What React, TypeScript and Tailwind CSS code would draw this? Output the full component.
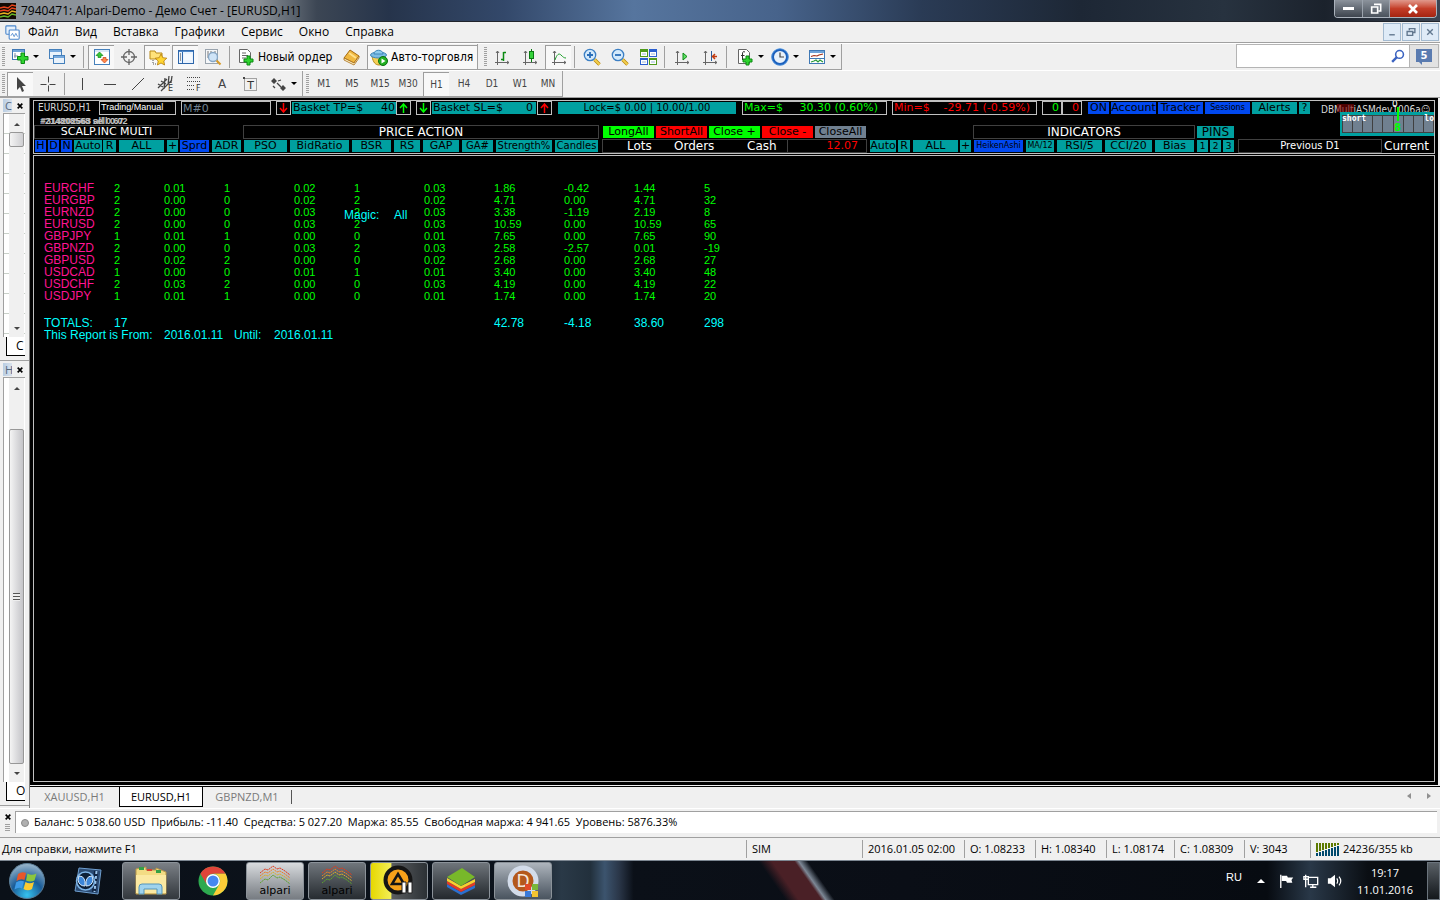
import type { ReactNode } from 'react'
import clsx from 'clsx'

type Children = { children?: ReactNode }

const SEGOE = "font-['Open_Sans','Noto_Sans',sans-serif]"
const TAHOMA = "font-['DejaVu_Sans_Condensed','DejaVu_Sans',sans-serif]"
const VERDANA = "font-['DejaVu_Sans',sans-serif]"
const ARIAL = "font-['Liberation_Sans',sans-serif]"

/* ---------- Icons ---------- */

function Icon({ children, size = 'size-[18px]' }: Children & { size?: string }) {
  return (
    <svg viewBox="0 0 18 18" className={clsx('shrink-0', size)} fill="none" aria-hidden="true">
      {children}
    </svg>
  )
}

const PLUS = 'M10 8h3v3h3v3h-3v3h-3v-3h-3v-3h3z'

const NewChartIcon = () => (
  <Icon>
    <rect x="1.5" y="1.5" width="12" height="10" fill="#fff" stroke="#3f78b5" />
    <path d="M2 3h11" stroke="#6ea3d8" strokeWidth="2" />
    <path d="M4 5v5M3 8h4" stroke="#7a8da3" />
    <path d="M10 5h3.500v3.500H17V12h-3.500v3.500H10V12H6.500V8.500H10z" fill="#2fd32f" stroke="#0b8a12" />
  </Icon>
)

const ProfilesIcon = () => (
  <Icon>
    <rect x="1.500" y="1.500" width="12" height="9" fill="#e9f2fb" stroke="#4580bb" />
    <path d="M2 3h11" stroke="#76a9dd" strokeWidth="2" />
    <rect x="5.500" y="7.500" width="11" height="8" fill="#e9f2fb" stroke="#4580bb" />
    <path d="M6 9h10" stroke="#76a9dd" strokeWidth="2" />
  </Icon>
)

const MarketIcon = () => (
  <Icon>
    <rect x="1.500" y="1.500" width="15" height="15" fill="#fff" stroke="#4580bb" />
    <path d="M2 3h14" stroke="#b5d2ee" />
    <path d="M6.500 4 10 7.500H8v2H5v-2H3z" fill="#37c637" stroke="#128a1a" strokeWidth=".7" />
    <path d="M11.500 15 15 11.500h-2v-2h-3v2H8z" fill="#ff8a4a" stroke="#c9401a" strokeWidth=".7" />
  </Icon>
)

const TargetIcon = () => (
  <Icon>
    <circle cx="9" cy="9" r="5.500" stroke="#666" strokeWidth="1.300" />
    <path d="M9 1v6M9 11v6M1 9h6M11 9h6" stroke="#666" strokeWidth="1.300" />
  </Icon>
)

const NavigatorIcon = () => (
  <Icon>
    <path d="M1 3h5l1 2h6v6H1z" fill="#ffe27a" stroke="#b88a18" />
    <path d="M4 12v4h3" stroke="#555" strokeDasharray="1 1" />
    <path d="m12 6 1.800 3.700 4 .5-3 2.800.8 4-3.600-2-3.600 2 .8-4-3-2.800 4-.5z" fill="#ffd633" stroke="#b57c0d" strokeWidth=".8" />
  </Icon>
)

const TerminalIcon = () => (
  <Icon>
    <rect x="1.500" y="2.500" width="15" height="13" fill="#eaf3fd" stroke="#2d66aa" />
    <path d="M2 3.500h14" stroke="#4c86c8" />
    <path d="M5.500 4v11" stroke="#2d66aa" />
    <path d="M3 6h1M3 8h1M3 10h1M3 12h1" stroke="#333" />
    <path d="M7 7h8M7 9h8M7 11h8" stroke="#fff" />
  </Icon>
)

const TesterIcon = () => (
  <Icon>
    <rect x="1.500" y="1.500" width="12" height="14" fill="#f5f7f9" stroke="#9aa4ae" />
    <path d="M4 3v7M7 3v5M11 3v5" stroke="#777" />
    <circle cx="9" cy="9" r="4.500" fill="#cfe4f7" stroke="#86a6c5" strokeWidth="1.300" />
    <path d="m12.500 12.500 4 4" stroke="#d59a2a" strokeWidth="2.200" />
  </Icon>
)

const NewOrderIcon = () => (
  <Icon>
    <path d="M2.500 1.500h8l3 3v10h-11z" fill="#fff" stroke="#666" />
    <path d="M5 5h4M5 7.500h6M5 10h4" stroke="#666" />
    <path d={PLUS} fill="#2fd32f" stroke="#0b8a12" />
  </Icon>
)

const BookIcon = () => (
  <Icon>
    <path d="m1 10 6-8 9 6-5 7z" fill="#f0b840" stroke="#a66a10" />
    <path d="m1 10 10 5 5-7v2l-5 7-10-5z" fill="#fff2c8" stroke="#a66a10" strokeWidth=".8" />
    <path d="m6 5 7 5" stroke="#ffe08a" strokeWidth="2" />
  </Icon>
)

const AutoIcon = () => (
  <Icon>
    <path d="M2 8c1 7 4 9 7 9s6-3 6-9z" fill="#f4cf55" stroke="#b88a1c" />
    <ellipse cx="8.500" cy="7" rx="8" ry="3" fill="#7bbbe4" stroke="#3f86b8" />
    <path d="M4 6c0-5 9-5 9 0z" fill="#8fcbed" stroke="#3f86b8" />
    <circle cx="13" cy="13" r="4.500" fill="#22b022" stroke="#0c7010" />
    <path d="m11.500 10.500 4 2.500-4 2.500z" fill="#fff" />
  </Icon>
)

function Axes({ children }: Children) {
  return (
    <Icon>
      <path d="M4.500 3v14M2 14.500h14M3 5l1.500-2L6 5M14 13l2 1.500-2 1.500" stroke="#666" />
      {children}
    </Icon>
  )
}

const BarsIcon = () => (
  <Axes><path d="M10.500 4v9M8 11.500h2.500M10.500 4.500H13" stroke="#0a8a12" strokeWidth="1.500" /></Axes>
)
const CandlesIcon = () => (
  <Axes>
    <path d="M10.500 1v13" stroke="#0a7a12" />
    <rect x="8.500" y="3.500" width="4" height="7" fill="#35d23a" stroke="#0a7a12" />
  </Axes>
)
const LineIcon = () => (
  <Axes><path d="M5 12c2-6 4-7 6-5 2 2 3 3 5 3" stroke="#1da02a" /></Axes>
)
const ShiftIcon = () => (
  <Axes><path d="m10 5 4 3.500-4 3.500z" fill="#5fe066" stroke="#0a8a12" /></Axes>
)
const IndentIcon = () => (
  <Axes>
    <path d="M10.500 3v10" stroke="#2b5d9b" />
    <path d="M16 8.500h-4M14 6l-2.500 2.500L14 11" stroke="#c13a10" strokeWidth="1.500" />
  </Axes>
)

function ZoomIcon({ plus = false }: { plus?: boolean }) {
  return (
    <Icon>
      <path d="m11.500 11.500 5 5" stroke="#b8860b" strokeWidth="3.400" />
      <path d="m11.500 11.500 5 5" stroke="#f2cf4f" strokeWidth="2" />
      <circle cx="7" cy="7" r="5.700" fill="#d3e9fb" stroke="#3b7fc4" strokeWidth="1.300" />
      <path d={plus ? 'M7 4v6M4 7h6' : 'M4 7h6'} stroke="#2a6eb8" strokeWidth="1.800" />
    </Icon>
  )
}

const TilesIcon = () => (
  <Icon>
    <path d="M1 1h8v8H1zM10 10h8v7h-8z" fill="#4f9a1c" />
    <path d="M10 1h8v8h-8zM1 10h8v7H1z" fill="#2b5fd0" />
    <path d="M2 4h6v4H2zM11 4h6v4h-6zM2 12h6v4H2zM11 12h6v4h-6z" fill="#fff" />
    <path d="M3 6h4M12 6h4M3 14h4M12 14h4" stroke="#9ab6d8" />
  </Icon>
)

const IndicatorsIcon = () => (
  <Icon>
    <path d="M2.500 1.500h8l3 3v11h-11z" fill="#fff" stroke="#666" />
    <path d="M9 4c-2-1-2.500 0-2.500 2v6M5 7.500h3.500" stroke="#333" />
    <path d={PLUS} fill="#2fd32f" stroke="#0b8a12" />
  </Icon>
)

const ClockIcon = () => (
  <Icon>
    <circle cx="9" cy="9" r="7.300" fill="#e8f1fa" stroke="#1c60bc" strokeWidth="2.600" />
    <circle cx="9" cy="9" r="8.300" stroke="#5da2e8" strokeWidth=".7" />
    <path d="M9 4.500V9h4" stroke="#444" strokeWidth="1.200" />
  </Icon>
)

const TemplateIcon = () => (
  <Icon>
    <rect x="1.500" y="2.500" width="15" height="13" fill="#fff" stroke="#3f78b5" />
    <path d="M2 4h14" stroke="#6ea3d8" strokeWidth="2" />
    <path d="m3 8.500 3-1 3 .5 2-1 4-1" stroke="#a33018" strokeWidth="1.200" />
    <path d="M2 10.500h14" stroke="#3f78b5" />
    <path d="m3 14 3-1 2-1 2 2 2-2 3 2" stroke="#2a9a38" strokeWidth="1.200" />
  </Icon>
)

const CursorIcon = () => (
  <Icon><path d="M5 2v13l3-3 2 5 2-1-2-5h4z" fill="#444" /></Icon>
)
const CrossIcon = () => (
  <Icon><path d="M9.500 1.500v6M9.500 10.500v6M1.500 9.500h6M10.500 9.500h6" stroke="#444" /></Icon>
)
const VLineIcon = () => <Icon><path d="M9.500 3v12" stroke="#444" /></Icon>
const HLineIcon = () => <Icon><path d="M3 9.500h12" stroke="#444" /></Icon>
const DiagIcon = () => <Icon><path d="m3 15 12-12" stroke="#444" /></Icon>

const ChannelIcon = () => (
  <Icon>
    <path d="m1 13 9-9M4 16 15 5M1 9l5 3M4 6l5 3M7 14l1-11M11 10l1-9M14 8l1-7" stroke="#444" strokeWidth="1.300" />
    <text x="11" y="16" fontSize="8" fill="#333" className="font-['DejaVu_Sans']">E</text>
  </Icon>
)
const FiboIcon = () => (
  <Icon>
    <path d="M2 2.500h14M2 6.500h14M2 10.500h8M2 14.500h8" stroke="#444" strokeDasharray="1 1" />
    <text x="11" y="16" fontSize="8" fill="#333" className="font-['DejaVu_Sans']">F</text>
  </Icon>
)
const LetterIcon = () => <span className={clsx(VERDANA, 'text-[12px] leading-4 text-[#444]')}>A</span>
const LabelIcon = () => (
  <Icon>
    <rect x="3.500" y="3.500" width="12" height="12" stroke="#555" strokeDasharray="1 1" />
    <path d="M2 2h2v2H2z" fill="#444" />
    <text x="9.500" y="13.500" fontSize="11" textAnchor="middle" fill="#333" className="font-['DejaVu_Sans']">T</text>
  </Icon>
)
const ArrowsIcon = () => (
  <Icon>
    <path d="m5 3 3 3-3 3-3-3zM4 8h4M14 10l3 3-3 3-3-3z" fill="#444" />
    <path d="m8 8 4 4M4 11l2 2M9 6l3-1" stroke="#444" strokeWidth="1.300" />
  </Icon>
)

const AlpariLines = ({ cls }: { cls: string }) => (
  <svg viewBox="0 0 32 20" className={cls} fill="none" aria-hidden="true">
    <path d="m1 8 5-4 3 1 5-4 4 3 3-1 5 3 5 4" stroke="#e03a1c" strokeDasharray="2 .6" />
    <path d="m1 11 5-4 3 1 5-4 4 3 3-1 5 3 5 4" stroke="#ee7f24" strokeDasharray="2 .6" />
    <path d="m1 14 5-4 3 1 5-4 4 3 3-1 5 3 5 4" stroke="#d9b02a" strokeDasharray="2 .6" />
    <path d="m1 18 5-4 3 1 5-5 4 3 3-1 5 3 5 4" stroke="#5ea32e" strokeDasharray="2 .6" />
  </svg>
)

/* ---------- Toolbars ---------- */

function Tool({ children, pressed = false, label }: Children & { pressed?: boolean; label: string }) {
  return (
    <button
      aria-label={label}
      className={clsx(
        'flex h-6 w-[26px] mx-px shrink-0 items-center justify-center',
        pressed && 'border-t border-l border-[#9d9d9d] bg-[#f8f8f8]'
      )}
    >
      {children}
    </button>
  )
}

const Handle = () => (
  <span className="ml-[2px] mr-px h-5 w-[3px] shrink-0 bg-[repeating-linear-gradient(#a0a0a0_0_1px,#f0f0f0_1px_2px)]" />
)
const Sep = () => <span className="mr-[3px] ml-[2px] h-[22px] w-px shrink-0 bg-[#a0a0a0]" />

function DropTool({ children, label, width = 'w-[37px]' }: Children & { label: string; width?: string }) {
  return (
    <button aria-label={label} className={clsx('flex h-6 shrink-0 items-center gap-1 pl-1', width)}>
      {children}
      <span className="size-0 border-x-[3px] border-t-[3px] border-x-transparent border-t-black" />
    </button>
  )
}

function ToolBar({ children }: Children) {
  return (
    <div className="flex h-[26px] shrink-0 items-center border-r border-b border-[#a0a0a0]">{children}</div>
  )
}

const periods = ['M1', 'M5', 'M15', 'M30', 'H1', 'H4', 'D1', 'W1', 'MN']
const menus = ['Файл', 'Вид', 'Вставка', 'Графики', 'Сервис', 'Окно', 'Справка']

function TitleBar() {
  return (
    <header className="flex h-[22px] items-start border-b border-[#20242c] bg-[linear-gradient(90deg,#8d949c_0,#8a9096_18%,#3c4654_22%,#26344b_27%,#33486a_35%,#56759e_44%,#47638b_54%,#2a3b55_64%,#1d2735_75%,#27323f_85%,#1b222c_92%,#3b4553_100%)]">
      <svg viewBox="0 0 16 16" className="mt-[3px] size-4" aria-hidden="true">
        <rect width="16" height="16" fill="#120a04" />
        <path d="m0 5 4-1 4 1 4-3 4 1M0 8l4-1 4 1 4-3 4 1" fill="none" stroke="#e8431c" strokeWidth="1.300" />
        <path d="m0 11 4-1 4 1 4-3 4 1" fill="none" stroke="#e8b020" strokeWidth="1.300" />
        <path d="m0 14 4-1 4 1 4-3 4 1" fill="none" stroke="#68b828" strokeWidth="1.300" />
      </svg>
      <h1 className={clsx(SEGOE, 'ml-[5px] text-[12px] leading-[22px] text-black')}>
        7940471: Alpari-Demo - Демо Счет - [EURUSD,H1]
      </h1>
      <div className="ml-auto mr-[3px] flex h-[18px] overflow-hidden rounded-b border border-t-0 border-[#aab2bc]">
        <button aria-label="Свернуть" className="flex w-7 items-center justify-center border-r border-[#9aa2ac] bg-linear-to-b from-[#8c939c] to-[#3d444e]">
          <span className="h-[3px] w-[11px] bg-white" />
        </button>
        <button aria-label="Восстановить" className="flex w-[27px] items-center justify-center border-r border-[#9aa2ac] bg-linear-to-b from-[#8c939c] to-[#4a525c]">
          <Icon size="size-[12px]">
            <path d="M6 2h10v10h-3M2.500 6h9v9h-9z" stroke="#fff" strokeWidth="2.500" />
          </Icon>
        </button>
        <button aria-label="Закрыть" className="flex w-[46px] items-center justify-center bg-linear-to-b from-[#e0988c] via-[#c43d28] to-[#a52410]">
          <Icon size="size-[12px]"><path d="m3 3 12 12M15 3 3 15" stroke="#fff" strokeWidth="4" /></Icon>
        </button>
      </div>
    </header>
  )
}

const mdiButtons = [
  { label: 'Свернуть окно', d: 'M4 14h10' },
  { label: 'Восстановить окно', d: 'M6 6V3h10v7h-3M2 8h10v7H2z' },
  { label: 'Закрыть окно', d: 'm4 4 10 10M14 4 4 14' },
]

function MenuBar() {
  return (
    <nav className="flex h-[21px] items-center border-b border-[#a0a0a0]">
      <span className="flex w-6 justify-end pr-1">
        <Icon size="size-[15px]">
          <rect x="1" y="1" width="12" height="10" rx="1" fill="#e6f0fb" stroke="#4a86cc" strokeWidth="1.300" />
          <rect x="5" y="6" width="12" height="11" rx="1" fill="#fff" stroke="#4a86cc" strokeWidth="1.300" />
          <path d="m7 13 2-3 2 4 2-4 2 4" stroke="#4a86cc" />
        </Icon>
      </span>
      {menus.map((m) => (
        <button key={m} className={clsx(SEGOE, 'mr-2 px-1 text-[12px] leading-5')}>{m}</button>
      ))}
      <div className="ml-auto mr-px flex gap-px">
        {mdiButtons.map((b) => (
          <button key={b.label} aria-label={b.label} className="flex h-[18px] w-[18px] items-center justify-center border border-[#a3bad0] bg-[#dfebf7]">
            <Icon size="size-[10px]"><path d={b.d} stroke="#62788f" strokeWidth="2.500" /></Icon>
          </button>
        ))}
      </div>
    </nav>
  )
}

function MainTools() {
  return (
    <div className="flex h-[27px] items-start border-t border-white">
      <ToolBar>
        <Handle />
        <span className="w-[1px]" />
        <DropTool label="Новый график"><NewChartIcon /></DropTool>
        <DropTool label="Профили"><ProfilesIcon /></DropTool>
        <Sep />
        <Tool pressed label="Обзор рынка"><MarketIcon /></Tool>
        <Tool label="Окно данных"><TargetIcon /></Tool>
        <Tool pressed label="Навигатор"><NavigatorIcon /></Tool>
        <Tool pressed label="Терминал"><TerminalIcon /></Tool>
        <Tool label="Тестер"><TesterIcon /></Tool>
        <Sep />
        <button className={clsx(TAHOMA, 'ml-1 flex w-[101px] items-center gap-[3px] whitespace-nowrap text-[12px]')}>
          <NewOrderIcon />
          Новый ордер
        </button>
        <Tool label="MetaEditor"><BookIcon /></Tool>
        <button className={clsx(TAHOMA, 'ml-px flex h-6 w-[110px] items-center gap-[3px] border-t border-l border-[#9d9d9d] bg-[#f8f8f8] pl-[2px] whitespace-nowrap text-[12px]')}>
          <AutoIcon />
          Авто-торговля
        </button>
      </ToolBar>
      <ToolBar>
        <span className="w-1" />
        <Handle />
        <Tool label="Бары"><BarsIcon /></Tool>
        <Tool label="Свечи"><CandlesIcon /></Tool>
        <Tool pressed label="Линия"><LineIcon /></Tool>
        <Sep />
        <Tool label="Увеличить"><ZoomIcon plus /></Tool>
        <Tool label="Уменьшить"><ZoomIcon /></Tool>
        <Tool label="Окна мозаикой"><TilesIcon /></Tool>
        <Sep />
        <Tool label="Автопрокрутка"><ShiftIcon /></Tool>
        <Tool label="Сдвиг графика"><IndentIcon /></Tool>
        <Sep />
        <span className="w-[2px]" />
        <DropTool label="Индикаторы" width="w-[35px]"><IndicatorsIcon /></DropTool>
        <DropTool label="Периоды"><ClockIcon /></DropTool>
        <DropTool label="Шаблоны"><TemplateIcon /></DropTool>
      </ToolBar>
      <div className="ml-auto mr-px flex h-6 border border-[#b4b4b4]">
        <label className="flex w-[172px] items-center bg-white pr-1">
          <input aria-label="Поиск" className="min-w-0 flex-1 outline-none" />
          <Icon size="size-[14px]">
            <circle cx="11" cy="7" r="5" stroke="#3b63c0" strokeWidth="2" />
            <path d="m7.500 10.500-6 6" stroke="#3b63c0" strokeWidth="3" />
          </Icon>
        </label>
        <button aria-label="Сообщения" className="relative flex w-[29px] items-center justify-center border-l border-[#b4b4b4] bg-[#e2e2e2]">
          <span className={clsx(VERDANA, 'mb-[2px] h-[13px] w-4 bg-[#5a7bb0] text-[10px] leading-[13px] font-bold text-white')}>5</span>
          <span className="absolute bottom-[2px] left-2 size-0 border-t-4 border-l-4 border-t-[#5a7bb0] border-l-transparent" />
        </button>
      </div>
    </div>
  )
}

function DrawTools() {
  return (
    <div className="flex h-[27px] border-t border-white">
      <ToolBar>
        <Handle />
        <Tool pressed label="Курсор"><CursorIcon /></Tool>
        <Tool label="Перекрестие"><CrossIcon /></Tool>
        <Sep />
        <Tool label="Вертикальная линия"><VLineIcon /></Tool>
        <Tool label="Горизонтальная линия"><HLineIcon /></Tool>
        <Tool label="Трендовая линия"><DiagIcon /></Tool>
        <Tool label="Канал"><ChannelIcon /></Tool>
        <Tool label="Фибоначчи"><FiboIcon /></Tool>
        <Tool label="Текст"><LetterIcon /></Tool>
        <Tool label="Метка"><LabelIcon /></Tool>
        <span className="w-px" />
        <DropTool label="Стрелки"><ArrowsIcon /></DropTool>
      </ToolBar>
      <ToolBar>
        <span className="w-px" />
        <Handle />
        {periods.map((p) => (
          <button
            key={p}
            className={clsx(
              TAHOMA,
              'mx-px h-6 w-[26px] text-[10px] text-[#444]',
              p === 'H1' && 'border-t border-l border-[#9d9d9d] bg-[#f8f8f8]'
            )}
          >
            {p}
          </button>
        ))}
      </ToolBar>
    </div>
  )
}

/* ---------- Side panels ---------- */

function SidePanel({ letter, tab, className, track, thumb }: {
  letter: string
  tab: string
  className: string
  track: string
  thumb: ReactNode
}) {
  return (
    <section className={clsx(SEGOE, 'flex flex-col border-b border-[#a0a0a0] pl-[3px] text-[12px]', className)}>
      <div className="flex h-[15px] shrink-0 items-center">
        <span className="h-[13px] w-[9px] overflow-hidden bg-linear-to-r from-[#b9cde2] to-[#d9e3ee] pl-[2px] text-[11px] leading-[13px] text-[#56697e]">{letter}</span>
        <button aria-label="Закрыть" className="ml-[5px]">
          <Icon size="size-[6px]"><path d="m2 2 14 14M16 2 2 16" stroke="#000" strokeWidth="5" /></Icon>
        </button>
      </div>
      <div className={clsx('mr-1 flex min-h-0 flex-1 border-t border-l border-[#a0a0a0]', track)}>
        <div className="ml-[5px] flex w-[15px] flex-col items-center bg-[#f0f0f0]">
          <span className="mt-[9px] mb-[6px] size-0 shrink-0 border-x-[3px] border-b-[3px] border-x-transparent border-b-[#444]" />
          {thumb}
          <span className="mt-auto mb-[7px] size-0 shrink-0 border-x-[3px] border-t-[3px] border-x-transparent border-t-[#444]" />
        </div>
      </div>
      <div className="mb-1 ml-[3px] h-[19px] w-[19px] shrink-0 overflow-hidden border-b border-l border-black bg-white pl-[9px] leading-[18px]">{tab}</div>
    </section>
  )
}

/* ---------- Chart header ---------- */

type CellDef = { t: string; c: string }

const TEAL = 'bg-[#00a0a0] text-black'

const filterCells: CellDef[] = [
  { t: 'H', c: 'ml-px w-[11px] bg-[#0048f0]' },
  { t: 'D', c: 'ml-[2px] w-[11px] bg-[#0048f0]' },
  { t: 'N', c: 'ml-[2px] w-[11px] bg-[#0048f0]' },
  { t: 'Auto', c: 'ml-[2px] w-[28px] bg-[#00a0a0]' },
  { t: 'R', c: 'ml-px w-[13px] bg-[#00a0a0]' },
  { t: 'ALL', c: 'ml-[3px] w-[45px] bg-[#00a0a0]' },
  { t: '+', c: 'ml-[3px] w-[11px] bg-[#00a0a0]' },
  { t: 'Sprd', c: 'ml-[2px] w-[29px] bg-[#0048f0]' },
  { t: 'ADR', c: 'ml-[3px] w-[29px] bg-[#00a0a0]' },
  { t: 'PSO', c: 'ml-[3px] w-[43px] bg-[#00a0a0]' },
  { t: 'BidRatio', c: 'ml-[3px] w-[59px] bg-[#00a0a0]' },
  { t: 'BSR', c: 'ml-[3px] w-[39px] bg-[#00a0a0]' },
  { t: 'RS', c: 'ml-[3px] w-[26px] bg-[#00a0a0]' },
  { t: 'GAP', c: 'ml-[3px] w-[36px] bg-[#00a0a0]' },
  { t: 'GA#', c: 'ml-[3px] w-[31px] bg-[#00a0a0] text-[10px]' },
  { t: 'Strength%', c: 'ml-[3px] w-[56px] bg-[#00a0a0] text-[10px]' },
  { t: 'Candles', c: 'ml-[3px] w-[43px] bg-[#00a0a0] text-[10px]' },
]

const indicatorCells: CellDef[] = [
  { t: 'Auto', c: 'ml-[3px] w-[26px] bg-[#00a0a0]' },
  { t: 'R', c: 'ml-[2px] w-[12px] bg-[#00a0a0]' },
  { t: 'ALL', c: 'ml-[3px] w-[45px] bg-[#00a0a0]' },
  { t: '+', c: 'ml-[2px] w-[11px] bg-[#00a0a0]' },
  { t: 'HeikenAshi', c: 'ml-[3px] w-[49px] bg-[#0048f0] text-[8px]' },
  { t: 'MA/12', c: 'ml-[3px] w-[28px] bg-[#00a0a0] text-[8px]' },
  { t: 'RSI/5', c: 'ml-[3px] w-[45px] bg-[#00a0a0]' },
  { t: 'CCI/20', c: 'ml-[3px] w-[47px] bg-[#00a0a0]' },
  { t: 'Bias', c: 'ml-[3px] w-[39px] bg-[#00a0a0]' },
  { t: '1', c: 'ml-[3px] w-[11px] bg-[#00a0a0] text-[9px]' },
  { t: '2', c: 'ml-[2px] w-[11px] bg-[#00a0a0] text-[9px]' },
  { t: '3', c: 'ml-[2px] w-[11px] bg-[#00a0a0] text-[9px]' },
]

const closeCells: CellDef[] = [
  { t: 'LongAll', c: 'ml-[4px] w-[51px] bg-[#00ff00]' },
  { t: 'ShortAll', c: 'ml-[2px] w-[51px] bg-[#ff0000]' },
  { t: 'Close +', c: 'ml-[2px] w-[51px] bg-[#00ff00]' },
  { t: 'Close -', c: 'ml-[2px] w-[51px] bg-[#ff0000]' },
  { t: 'CloseAll', c: 'ml-[2px] w-[51px] bg-[#708090]' },
]

const accountCells: CellDef[] = [
  { t: 'ON', c: 'ml-[6px] w-[21px] bg-[#0048f0]' },
  { t: 'Account', c: 'ml-[2px] w-[45px] bg-[#0048f0]' },
  { t: 'Tracker', c: 'ml-[2px] w-[45px] bg-[#0048f0]' },
  { t: 'Sessions', c: 'ml-[2px] w-[45px] bg-[#0048f0] text-[8px]' },
  { t: 'Alerts', c: 'ml-[2px] w-[45px] bg-[#00a0a0]' },
  { t: '?', c: 'ml-[2px] w-[11px] bg-[#00a0a0]' },
]

function Cells({ items }: { items: CellDef[] }) {
  return (
    <>
      {items.map((it, i) => (
        <button
          key={i}
          className={clsx(
            'flex h-3 shrink-0 items-center justify-center overflow-hidden whitespace-nowrap text-black',
            !it.c.includes('text-[') && 'text-[11px]',
            it.c
          )}
        >
          {it.t}
        </button>
      ))}
    </>
  )
}

function ArrowBox({ up = false, color, className }: { up?: boolean; color: string; className?: string }) {
  return (
    <button aria-label={up ? 'Больше' : 'Меньше'} className={clsx('flex h-[14px] w-[15px] shrink-0 items-center justify-center border border-[#c0c0c0]', className)}>
      <svg viewBox="0 0 9 10" className={clsx('h-[10px] w-[9px]', up && 'rotate-180')} fill="none">
        <path d="M4.500 0v9M1 5l3.500 4L8 5" stroke={color} strokeWidth="1.500" />
      </svg>
    </button>
  )
}

function Heading({ children, className }: Children & { className: string }) {
  return (
    <h2 className={clsx('flex h-[14px] shrink-0 items-center justify-center border border-[#404040] text-white', className)}>
      {children}
    </h2>
  )
}

function Gauge() {
  return (
    <div className="absolute top-[11px] right-0 h-6 w-[94px] border-y-[3px] border-l-[2px] border-[#00a0a0] bg-[#708090]">
      <div className="flex h-full border-t border-l border-[#404040]">
        {[0, 1, 2, 3, 4, 5, 6, 7, 8].map((i) => (
          <span key={i} className="flex-1 border-r border-b border-[#404040]" />
        ))}
      </div>
      <span className="absolute -top-px left-0 font-['DejaVu_Sans_Mono',monospace] text-[8px] leading-[9px] font-bold text-white">short</span>
      <span className="absolute -top-px right-0 font-['DejaVu_Sans_Mono',monospace] text-[8px] leading-[9px] font-bold text-white">lo</span>
      <span className="absolute -top-2 left-[55px] h-[14px] w-[2px] bg-[#00ff00]" />
      <span className="absolute top-2 left-[52px] text-[10px] leading-[10px] font-bold text-[#00ff00]">8</span>
      <span className="absolute -top-4 left-[50px] text-[9px] leading-[10px] text-white">0</span>
    </div>
  )
}

function ChartHeader() {
  return (
    <div className={clsx(VERDANA, 'relative h-[54px] shrink-0 overflow-hidden border border-[#c0c0c0] text-[11px] leading-3')}>
      <div className="flex h-[14px] items-center">
        <span className={clsx(TAHOMA, 'w-[65px] shrink-0 pl-1 text-[10px] text-[#d8d8d8]')}>EURUSD,H1</span>
        <span className={clsx(ARIAL, 'h-[14px] w-[77px] shrink-0 border border-[#c0c0c0] pl-px text-[9px] leading-[11px] text-white')}>Trading/Manual</span>
        <input aria-label="Magic" defaultValue="M#0" className="ml-[5px] h-[14px] w-[90px] shrink-0 border border-[#c0c0c0] bg-black pl-px text-[11px] text-[#708090]" />
        <ArrowBox color="#ff0000" className="ml-[5px]" />
        <span className={clsx(TEAL, 'ml-px flex h-3 w-[104px] shrink-0 justify-between px-px')}><span>Basket TP=$</span><span>40</span></span>
        <ArrowBox up color="#00ff00" />
        <ArrowBox color="#00ff00" className="ml-[5px]" />
        <span className={clsx(TEAL, 'ml-px flex h-3 w-[104px] shrink-0 justify-between px-px')}><span>Basket SL=$</span><span className="pr-[2px]">0</span></span>
        <ArrowBox up color="#ff0000" className="ml-px" />
        <span className={clsx(TEAL, 'ml-[6px] h-3 w-[178px] shrink-0 text-center text-[10px] whitespace-pre')}>Lock=$ 0.00 | 10.00/1.00</span>
        <span className="ml-[6px] flex h-[14px] w-[145px] shrink-0 justify-between border border-[#c0c0c0] pr-2 pl-px text-[#00ff00]"><span>Max=$</span><span>30.30 (0.60%)</span></span>
        <span className="ml-[5px] flex h-[14px] w-[145px] shrink-0 justify-between border border-[#c0c0c0] pr-[6px] pl-px text-[#ff0000]"><span>Min=$</span><span>-29.71 (-0.59%)</span></span>
        <span className="ml-[5px] h-[14px] w-5 shrink-0 border border-[#c0c0c0] pr-[2px] text-right text-[#00ff00]">0</span>
        <span className="h-[14px] w-5 shrink-0 border border-[#c0c0c0] pr-[2px] text-right text-[#ff0000]">0</span>
        <Cells items={accountCells} />
        <span className={clsx(TAHOMA, 'relative mt-[3px] ml-[11px] text-[10px] whitespace-nowrap text-[#d8d8d8]')}>
          DBMultiASMdev1006a☺
          <span className="absolute top-0 left-4 h-2 w-[17px] bg-[#800000]/60" />
        </span>
      </div>
      <div className={clsx(ARIAL, 'relative mt-px ml-[6px] h-[9px] overflow-hidden text-[9px] leading-[11px] font-bold text-[#c0c0c0]')}>
        <span>#214808568 sell 0.02</span>
        <span className="absolute top-0 left-px">#314202563 all 0.67</span>
      </div>
      <div className="flex h-[14px] items-center">
        <Heading className="w-[145px]">SCALP.INC MULTI</Heading>
        <Heading className="ml-[64px] w-[356px] text-[12px]">PRICE ACTION</Heading>
        <Cells items={closeCells} />
        <Heading className="ml-[107px] w-[222px] text-[12px]">INDICATORS</Heading>
        <Cells items={[{ t: 'PINS', c: 'ml-[2px] w-[37px] bg-[#00a0a0] text-[12px]' }]} />
      </div>
      <div className="flex h-[14px] items-center">
        <Cells items={filterCells} />
        <div className="ml-1 flex h-[14px] w-[265px] shrink-0 items-center border border-[#404040] text-[12px] text-white">
          <span className="w-[71px] pl-6">Lots</span>
          <span className="w-[73px]">Orders</span>
          <span className="w-[40px]">Cash</span>
          <span className="flex-1 border-l border-[#404040] pr-2 text-right text-[11px] text-[#ff0000]">12.07</span>
        </div>
        <Cells items={indicatorCells} />
        <Heading className="ml-1 w-[144px] text-[10px]">Previous D1</Heading>
        <span className="ml-[2px] text-[12px] text-white">Current</span>
      </div>
      <Gauge />
    </div>
  )
}

/* ---------- Report ---------- */

const rows = [
  ['EURCHF', '2', '0.01', '1', '0.02', '1', '0.03', '1.86', '-0.42', '1.44', '5'],
  ['EURGBP', '2', '0.00', '0', '0.02', '2', '0.02', '4.71', '0.00', '4.71', '32'],
  ['EURNZD', '2', '0.00', '0', '0.03', '2', '0.03', '3.38', '-1.19', '2.19', '8'],
  ['EURUSD', '2', '0.00', '0', '0.03', '2', '0.03', '10.59', '0.00', '10.59', '65'],
  ['GBPJPY', '1', '0.01', '1', '0.00', '0', '0.01', '7.65', '0.00', '7.65', '90'],
  ['GBPNZD', '2', '0.00', '0', '0.03', '2', '0.03', '2.58', '-2.57', '0.01', '-19'],
  ['GBPUSD', '2', '0.02', '2', '0.00', '0', '0.02', '2.68', '0.00', '2.68', '27'],
  ['USDCAD', '1', '0.00', '0', '0.01', '1', '0.01', '3.40', '0.00', '3.40', '48'],
  ['USDCHF', '2', '0.03', '2', '0.00', '0', '0.03', '4.19', '0.00', '4.19', '22'],
  ['USDJPY', '1', '0.01', '1', '0.00', '0', '0.01', '1.74', '0.00', '1.74', '20'],
]

const totals = ['TOTALS:', '17', '', '', '', '', '', '42.78', '-4.18', '38.60', '298']
const colWidths = ['w-[70px]', 'w-[50px]', 'w-[60px]', 'w-[70px]', 'w-[60px]', 'w-[70px]', 'w-[70px]', 'w-[70px]', 'w-[70px]', 'w-[70px]', 'w-[70px]']

function Report() {
  return (
    <div className={clsx(ARIAL, 'relative mt-px flex-1 border border-[#c0c0c0] pt-[26px] pl-[10px] text-[12px] leading-3')}>
      <table className="table-fixed border-collapse">
        <colgroup>
          {colWidths.map((w, i) => <col key={i} className={w} />)}
        </colgroup>
        <tbody>
          {rows.map((r) => (
            <tr key={r[0]} className="h-3">
              {r.map((v, i) => (
                <td key={i} className={clsx('p-0 align-top', i === 0 ? 'text-[12px] text-[#ff1493]' : 'text-[11px] text-[#00ff00]')}>
                  {v}
                </td>
              ))}
            </tr>
          ))}
        </tbody>
        <tfoot>
          <tr className="text-[#00ffff]">
            {totals.map((v, i) => <td key={i} className="p-0 pt-[15px]">{v}</td>)}
          </tr>
        </tfoot>
      </table>
      <p className="flex text-[#00ffff]">
        <span className="w-[120px]">This Report is From:</span>
        <span className="w-[70px]">2016.01.11</span>
        <span className="w-10">Until:</span>
        <span>2016.01.11</span>
      </p>
      <p className="absolute top-[53px] left-[310px] flex text-[#00ffff]">
        <span className="w-[50px]">Magic:</span>
        <span>All</span>
      </p>
    </div>
  )
}

/* ---------- Bottom ---------- */

const quotes: CellDef[] = [
  { t: 'SIM', c: 'w-[116px]' },
  { t: '2016.01.05 02:00', c: 'w-[102px]' },
  { t: 'O: 1.08233', c: 'w-[71px]' },
  { t: 'H: 1.08340', c: 'w-[71px]' },
  { t: 'L: 1.08174', c: 'w-[68px]' },
  { t: 'C: 1.08309', c: 'w-[70px]' },
  { t: 'V: 3043', c: 'w-[66px]' },
]

function StatusBar() {
  return (
    <footer className={clsx(SEGOE, 'flex h-[23px] items-center border-t border-[#a0a0a0] text-[11px] whitespace-nowrap')}>
      <span className="flex-1 pl-[2px]">Для справки, нажмите F1</span>
      {quotes.map((q) => (
        <span key={q.t} className={clsx('h-[18px] border-l border-[#a0a0a0] pl-[5px] leading-[18px]', q.c)}>{q.t}</span>
      ))}
      <span className="flex h-[18px] w-[130px] items-center gap-1 border-l border-[#a0a0a0] pl-[5px]">
        <svg viewBox="0 0 23 13" className="h-[13px] w-[23px]" aria-hidden="true">
          {[0, 1, 2, 3, 4, 5, 6, 7].map((i) => (
            <g key={i}>
              <rect x={i * 3} y="0" width="2" height={9 - i} fill="#5d7a00" />
              <rect x={i * 3} y={10 - i} width="2" height={3 + i} fill="#004a6e" />
            </g>
          ))}
        </svg>
        24236/355 kb
      </span>
    </footer>
  )
}

function TaskButton({ children, label, className }: Children & { label: string; className: string }) {
  return (
    <button aria-label={label} className={clsx('mr-1 flex h-[38px] w-[58px] shrink-0 items-center justify-center rounded-[3px] border border-[#8b9299]', className)}>
      {children}
    </button>
  )
}

function Taskbar() {
  return (
    <div className="flex h-10 items-center border-t border-[#7d8792] bg-[linear-gradient(55deg,transparent_50%,#4a2026_53%,#4a2026_58%,#7d8896_59%,transparent_61%),linear-gradient(90deg,#0a1018_0,#0c131c_36%,#2a3947_39%,#22303c_41%,#3c546e_42%,#2a3648_43%,#0b1018_44%,#0a0e16_63%,#070b11_88%,#293848_91%,#0a0e13_95%)] bg-[size:420px_100%,100%_100%] bg-[position:562px_0,0_0] bg-no-repeat">
      <button aria-label="Пуск" className="ml-2 w-[38px] shrink-0">
        <svg viewBox="0 0 38 38" className="size-[38px]">
          <defs>
            <radialGradient id="orb" cx=".5" cy=".9" r=".9">
              <stop offset="0" stopColor="#35c2ee" />
              <stop offset=".5" stopColor="#1a5c98" />
              <stop offset="1" stopColor="#9db8cc" />
            </radialGradient>
          </defs>
          <circle cx="19" cy="19" r="17.500" fill="url(#orb)" stroke="#5b7d96" />
          <path d="M10 12q4-3 8-1l-1.500 7q-4-2-8 1z" fill="#e8562a" />
          <path d="M19.500 11.500q4 2.500 9 0l-2 7q-4 2-8.500 0z" fill="#8cc63e" />
          <path d="M8 20.500q4-3 8-1l-2 7q-3-2-7.500 1z" fill="#3d9be8" />
          <path d="M17.500 20q4 2.500 8.500 0l-2 7q-4 2.500-8.500 0z" fill="#fccb30" />
        </svg>
      </button>
      <button aria-label="Плеер" className="ml-7 w-7 shrink-0">
        <svg viewBox="0 0 28 28" className="size-7">
          <path d="M5 1 27 3l-3 24L1 24z" fill="#2a4a72" stroke="#6f9fd0" />
          <path d="m22 4-2 21" stroke="#0f2240" strokeWidth="4" />
          <path d="m22.500 4-2 21" stroke="#9cc4ea" strokeWidth="2" strokeDasharray="3 2" />
          <circle cx="11.500" cy="14" r="9" fill="#0d2038" stroke="#7eb4e6" strokeWidth="1.500" />
          <path d="M5 9q7 0 6 10-6 0-7-6zM18 9q-7 0-6 10 6 0 7-6z" fill="#3d86d8" stroke="#d7ebff" />
        </svg>
      </button>
      <span className="w-5 shrink-0" />
      <TaskButton label="Проводник" className="bg-linear-to-b from-[#7b8086] to-[#33383d]">
        <svg viewBox="0 0 34 32" className="h-8 w-[34px]">
          <path d="M2 4 12 2v3h10V3l10 4v22H2z" fill="#f3dc84" stroke="#b8974a" />
          <path d="M2 10h30v18H2z" fill="#fbe9a2" />
          <path d="M5 2h5v3H5zM22 5h5v3h-5z" fill="#35a046" />
          <path d="M13 4h5v2h-5z" fill="#d84030" />
          <path d="M5 29v-7q0-3 3-3h17q3 0 3 3v7h-5v-5H10v5z" fill="#9fd3ee" stroke="#5595bb" />
        </svg>
      </TaskButton>
      <button aria-label="Chrome" className="mr-[18px] ml-[14px] w-[30px] shrink-0">
        <svg viewBox="0 0 30 30" className="size-[30px]">
          <circle cx="15" cy="15" r="14.500" fill="#2da94f" />
          <path d="M2.400 7.800A14.500 14.500 0 0 1 27.600 7.800H15a7.200 7.200 0 0 0-6.200 10.800z" fill="#e0453a" />
          <path d="M27.600 7.800A14.500 14.500 0 0 1 15 29.500l6.200-10.900A7.200 7.200 0 0 0 15 7.800z" fill="#fccd38" />
          <circle cx="15" cy="15" r="7" fill="#fff" />
          <circle cx="15" cy="15" r="5.500" fill="#4587f0" />
        </svg>
      </button>
      <TaskButton label="alpari" className="flex-col bg-linear-to-b from-[#d8dbde] to-[#777c82]">
        <AlpariLines cls="h-5 w-8" />
        <span className={clsx(VERDANA, 'text-[11px] leading-3 text-black')}>alpari</span>
      </TaskButton>
      <TaskButton label="alpari" className="flex-col bg-linear-to-b from-[#70767c] to-[#272c31]">
        <AlpariLines cls="h-5 w-8" />
        <span className={clsx(VERDANA, 'text-[11px] leading-3 text-black')}>alpari</span>
      </TaskButton>
      <TaskButton label="AIMP" className="bg-[linear-gradient(90deg,#e6d800_0,#f4ee58_36%,#5a5d60_37%,#2c3135_100%)]">
        <svg viewBox="0 0 32 32" className="size-8">
          <circle cx="15" cy="15" r="12.500" fill="#f7a11a" stroke="#151515" strokeWidth="4" />
          <path d="m15 9 6 10H9z" fill="none" stroke="#151515" strokeWidth="2.500" />
          <path d="M19 17h4v11h-4zM25 17h4v11h-4z" fill="#fff" stroke="#222" />
        </svg>
      </TaskButton>
      <TaskButton label="BlueStacks" className="bg-linear-to-b from-[#6f757b] to-[#24292e]">
        <svg viewBox="0 0 30 28" className="h-7 w-[30px]">
          <path d="m1 17 14 8 14-7v3l-14 7L1 20z" fill="#2a6fd0" />
          <path d="m1 14 14 8 14-7v3l-14 7L1 17z" fill="#e23a28" />
          <path d="m1 11 14 8 14-7v3l-14 7L1 14z" fill="#f8d030" />
          <path d="m1 10 15-9 13 9-14 9z" fill="#78b82a" />
        </svg>
      </TaskButton>
      <TaskButton label="DAEMON" className="bg-linear-to-b from-[#aeb5bd] to-[#4a545f]">
        <svg viewBox="0 0 32 32" className="size-8">
          <circle cx="16" cy="16" r="13" fill="#b4581c" stroke="#d3dcea" strokeWidth="5" />
          <text x="16" y="22" fontSize="17" textAnchor="middle" fill="#f4e6da" className="font-['DejaVu_Sans']">D</text>
          <path d="M18 19h6v6h-6z" fill="#e04a28" />
          <path d="M25 19h6v6h-6z" fill="#7ab83a" />
          <path d="M18 26h6v6h-6z" fill="#3a7ad8" />
          <path d="M25 26h6v6h-6z" fill="#f4c430" />
        </svg>
      </TaskButton>
      <div className={clsx(SEGOE, 'ml-auto flex h-full shrink-0 items-center text-[11px] text-white')}>
        <span className={clsx(ARIAL, 'mr-[15px] mb-[6px]')}>RU</span>
        <span className="mr-[14px] size-0 border-x-4 border-b-4 border-x-transparent border-b-white" />
        <Icon size="size-4 mr-2">
          <path d="M2 2v15" stroke="#fff" strokeWidth="1.500" />
          <path d="M3 3h6l1 2h6l-2 3 1 3H9L8 9H3z" fill="#fff" />
        </Icon>
        <Icon size="size-4 mr-2">
          <path d="M6 5h10.500v8H6zM8 16h7M11 13v3M3 2v14M1 4h5v3H1z" stroke="#fff" strokeWidth="1.500" />
        </Icon>
        <Icon size="size-4">
          <path d="M1 6h3l5-4v14l-5-4H1z" fill="#fff" />
          <path d="M11 6q2 3 0 6M13.500 4q4 5 0 10" stroke="#fff" strokeWidth="1.300" />
        </Icon>
        <time className="w-[84px] text-center leading-[17px]">
          19:17
          <br />
          11.01.2016
        </time>
        <button aria-label="Свернуть все окна" className="h-[38px] w-[13px] border border-[#6b747d] bg-linear-to-b from-[#5a6167] to-[#14181c]" />
      </div>
    </div>
  )
}

const tabs: CellDef[] = [
  { t: 'XAUUSD,H1', c: 'w-[89px] text-[#7a7a7a]' },
  { t: 'EURUSD,H1', c: 'w-[84px] border border-t-0 border-black bg-white text-black' },
  { t: 'GBPNZD,M1', c: 'w-[88px] text-[#7a7a7a]' },
]

export default function App() {
  return (
    <div className="flex min-h-screen w-full flex-col overflow-hidden bg-[#f0f0f0] text-black">
      <TitleBar />
      <MenuBar />
      <MainTools />
      <DrawTools />

      <main className="flex flex-1 border-t border-[#a0a0a0]">
        <aside className="flex w-[30px] shrink-0 flex-col gap-px border-r border-[#808080] pb-[2px]">
          <SidePanel
            letter="С"
            tab="С"
            className="h-[263px] shrink-0"
            track="bg-[repeating-linear-gradient(#fff_0_19px,#c8d0c8_19px_20px)]"
            thumb={<span className="h-[15px] w-[15px] shrink-0 rounded-xs border border-[#979797] bg-linear-to-r from-[#f4f4f4] to-[#cfcfd2]" />}
          />
          <SidePanel
            letter="Н"
            tab="О"
            className="flex-1"
            track="bg-white"
            thumb={
              <span className="mt-[33px] mb-2 flex w-[15px] flex-1 items-center justify-center rounded-xs border border-[#979797] bg-linear-to-r from-[#f4f4f4] to-[#c4c4c8]">
                <span className="h-2 w-[7px] bg-[repeating-linear-gradient(#555_0_1px,#eee_1px_3px)]" />
              </span>
            }
          />
        </aside>

        <div className="flex min-w-0 flex-1 flex-col">
          <div className="mr-[2px] flex flex-1 flex-col bg-black pt-[2px] pr-[3px] pb-[3px] pl-[3px]">
            <ChartHeader />
            <Report />
          </div>
          <div className={clsx(SEGOE, 'mt-px flex h-[22px] shrink-0 border-t border-black text-[11px]')}>
            {tabs.map((t) => (
              <button key={t.t} className={clsx('h-5 leading-5', t.c)}>{t.t}</button>
            ))}
            <span className="mt-[3px] h-[14px] w-px bg-[#555]" />
            <span className="ml-auto mt-[6px] mr-4 size-0 border-y-[3px] border-r-[4px] border-y-transparent border-r-[#909090]" />
            <span className="mt-[6px] mr-[9px] size-0 border-y-[3px] border-l-[4px] border-y-transparent border-l-[#909090]" />
          </div>
        </div>
      </main>

      <div className="flex h-[29px] shrink-0 items-stretch border-t border-white pt-[2px] pb-1">
        <div className="flex w-[15px] flex-col items-center pt-[3px]">
          <button aria-label="Закрыть терминал">
            <Icon size="size-[6px]"><path d="m2 2 14 14M16 2 2 16" stroke="#000" strokeWidth="5" /></Icon>
          </button>
          <span className="mt-auto mb-px h-2 w-[5px] bg-[repeating-linear-gradient(#a0a0a0_0_1px,#f0f0f0_1px_2px)]" />
        </div>
        <p className={clsx(SEGOE, 'mr-[3px] flex flex-1 items-center border-t border-l border-[#a0a0a0] bg-white pl-[5px] text-[11px] whitespace-pre')}>
          <span className="mr-[5px] size-2 rounded-full border border-[#8a8a8a] bg-[#b0b0b0]" />
          {'Баланс: 5 038.60 USD  Прибыль: -11.40  Средства: 5 027.20  Маржа: 85.55  Свободная маржа: 4 941.65  Уровень: 5876.33%'}
        </p>
      </div>
      <StatusBar />
      <Taskbar />
    </div>
  )
}
